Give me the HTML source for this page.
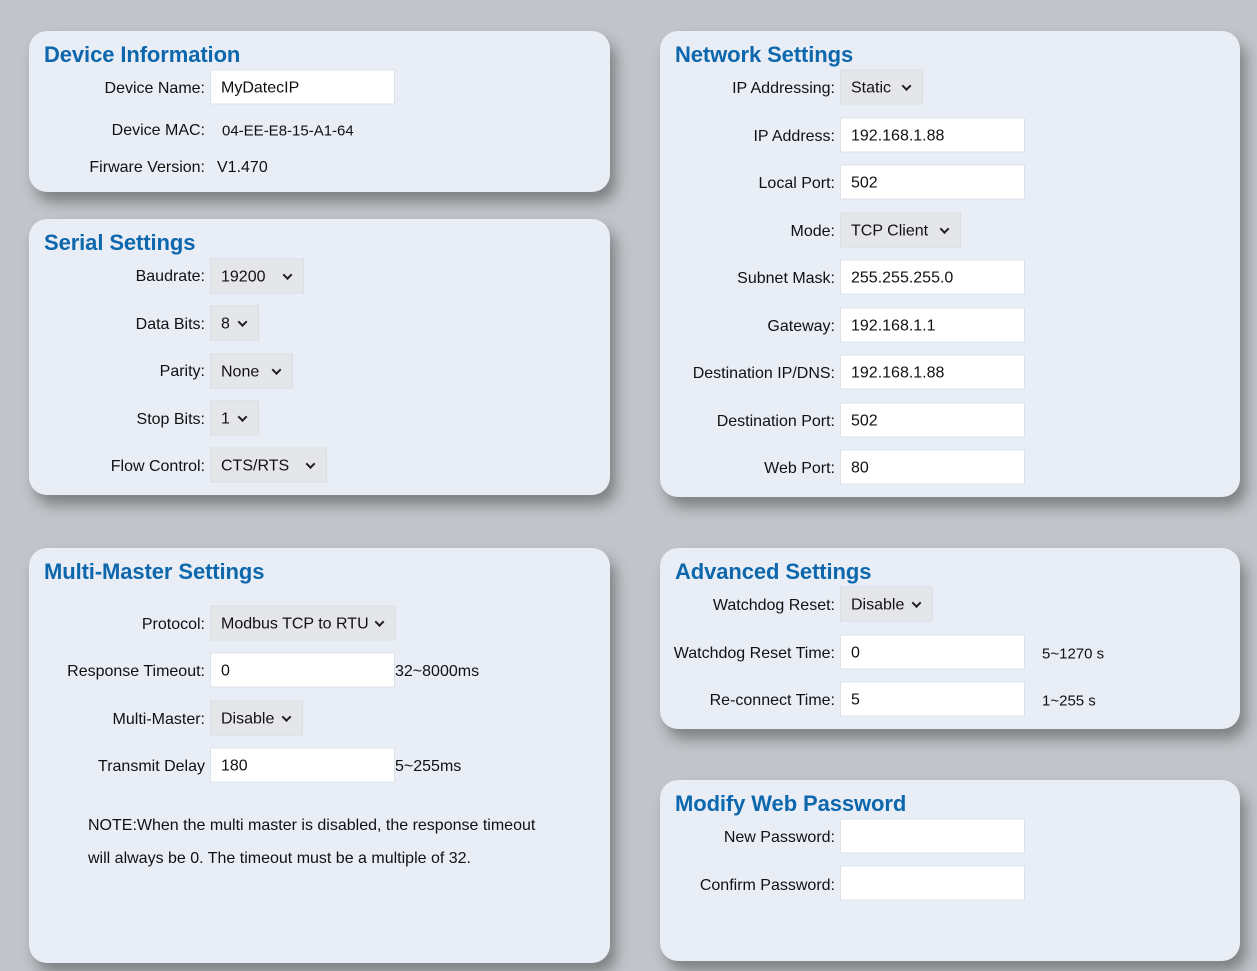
<!DOCTYPE html>
<html><head><meta charset="utf-8"><style>
body{margin:0;width:1257px;height:971px;background:#c1c4c9;font-family:"Liberation Sans",sans-serif;position:relative;overflow:hidden;color:#111}
.p{position:absolute;background:#e8edf6;border-radius:18px;box-shadow:6px 10px 14px rgba(0,0,0,.35)}
.t{position:absolute;font-size:22px;font-weight:bold;color:#0d67ad;white-space:nowrap;letter-spacing:-0.1px}
.l{position:absolute;font-size:16px;text-align:right;white-space:nowrap;transform:translateY(-50%);margin-top:1px}
.v{position:absolute;font-size:16px;white-space:nowrap;transform:translateY(-50%);margin-top:1px}
.i{position:absolute;background:#fff;border:1px solid #dde2ea;box-sizing:border-box;height:35px;font-size:16px;line-height:35px;padding-left:10px;transform:translateY(-50%)}
.s{position:absolute;background:#e4e6ea;border:1px solid #dadde2;box-sizing:border-box;height:35px;font-size:16px;line-height:35px;padding-left:10px;transform:translateY(-50%)}
.s:after{content:"";position:absolute;right:12px;top:12px;width:5px;height:5px;border-right:2px solid #222;border-bottom:2px solid #222;transform:rotate(45deg)}
</style></head><body>
<div class="p" style="left:29px;top:31px;width:581px;height:161px"></div>
<div class="p" style="left:29px;top:219px;width:581px;height:276px"></div>
<div class="p" style="left:29px;top:548px;width:581px;height:415px"></div>
<div class="p" style="left:660px;top:31px;width:580px;height:466px"></div>
<div class="p" style="left:660px;top:548px;width:580px;height:181px"></div>
<div class="p" style="left:660px;top:780px;width:580px;height:181px"></div>

<div class="t" style="left:44px;top:42px">Device Information</div>
<div class="l" style="right:1052px;top:88px">Device Name:</div><div class="i" style="left:210px;top:87px;width:185px">MyDatecIP</div>
<div class="l" style="right:1052px;top:130px">Device MAC:</div><div class="v" style="left:222px;top:130px;font-size:15px">04-EE-E8-15-A1-64</div>
<div class="l" style="right:1052px;top:167px">Firware Version:</div><div class="v" style="left:217px;top:167px">V1.470</div>

<div class="t" style="left:44px;top:230px">Serial Settings</div>
<div class="l" style="right:1052px;top:276px">Baudrate:</div><div class="s" style="left:210px;top:276px;width:94px">19200</div>
<div class="l" style="right:1052px;top:324px">Data Bits:</div><div class="s" style="left:210px;top:323px;width:49px">8</div>
<div class="l" style="right:1052px;top:371px">Parity:</div><div class="s" style="left:210px;top:371px;width:83px">None</div>
<div class="l" style="right:1052px;top:419px">Stop Bits:</div><div class="s" style="left:210px;top:418px;width:49px">1</div>
<div class="l" style="right:1052px;top:466px">Flow Control:</div><div class="s" style="left:210px;top:465px;width:117px">CTS/RTS</div>

<div class="t" style="left:44px;top:559px">Multi-Master Settings</div>
<div class="l" style="right:1052px;top:624px">Protocol:</div><div class="s" style="left:210px;top:623px;width:186px">Modbus TCP to RTU</div>
<div class="l" style="right:1052px;top:671px">Response Timeout:</div><div class="i" style="left:210px;top:670px;width:185px">0</div><div class="v" style="left:395px;top:671px">32~8000ms</div>
<div class="l" style="right:1052px;top:719px">Multi-Master:</div><div class="s" style="left:210px;top:718px;width:93px">Disable</div>
<div class="l" style="right:1052px;top:766px">Transmit Delay</div><div class="i" style="left:210px;top:765px;width:185px">180</div><div class="v" style="left:395px;top:766px">5~255ms</div>
<div class="v" style="left:88px;top:825px">NOTE:When the multi master is disabled, the response timeout</div>
<div class="v" style="left:88px;top:858px">will always be 0. The timeout must be a multiple of 32.</div>

<div class="t" style="left:675px;top:42px">Network Settings</div>
<div class="l" style="right:422px;top:88px">IP Addressing:</div><div class="s" style="left:840px;top:87px;width:83px">Static</div>
<div class="l" style="right:422px;top:136px">IP Address:</div><div class="i" style="left:840px;top:135px;width:185px">192.168.1.88</div>
<div class="l" style="right:422px;top:183px">Local Port:</div><div class="i" style="left:840px;top:182px;width:185px">502</div>
<div class="l" style="right:422px;top:231px">Mode:</div><div class="s" style="left:840px;top:230px;width:121px">TCP Client</div>
<div class="l" style="right:422px;top:278px">Subnet Mask:</div><div class="i" style="left:840px;top:277px;width:185px">255.255.255.0</div>
<div class="l" style="right:422px;top:326px">Gateway:</div><div class="i" style="left:840px;top:325px;width:185px">192.168.1.1</div>
<div class="l" style="right:422px;top:373px">Destination IP/DNS:</div><div class="i" style="left:840px;top:372px;width:185px">192.168.1.88</div>
<div class="l" style="right:422px;top:421px">Destination Port:</div><div class="i" style="left:840px;top:420px;width:185px">502</div>
<div class="l" style="right:422px;top:468px">Web Port:</div><div class="i" style="left:840px;top:467px;width:185px">80</div>

<div class="t" style="left:675px;top:559px">Advanced Settings</div>
<div class="l" style="right:422px;top:605px">Watchdog Reset:</div><div class="s" style="left:840px;top:604px;width:93px">Disable</div>
<div class="l" style="right:422px;top:653px">Watchdog Reset Time:</div><div class="i" style="left:840px;top:652px;width:185px">0</div><div class="v" style="left:1042px;top:653px;font-size:15px">5~1270 s</div>
<div class="l" style="right:422px;top:700px">Re-connect Time:</div><div class="i" style="left:840px;top:699px;width:185px">5</div><div class="v" style="left:1042px;top:700px;font-size:15px">1~255 s</div>

<div class="t" style="left:675px;top:791px">Modify Web Password</div>
<div class="l" style="right:422px;top:837px">New Password:</div><div class="i" style="left:840px;top:836px;width:185px"></div>
<div class="l" style="right:422px;top:885px">Confirm Password:</div><div class="i" style="left:840px;top:883px;width:185px"></div>
</body></html>
